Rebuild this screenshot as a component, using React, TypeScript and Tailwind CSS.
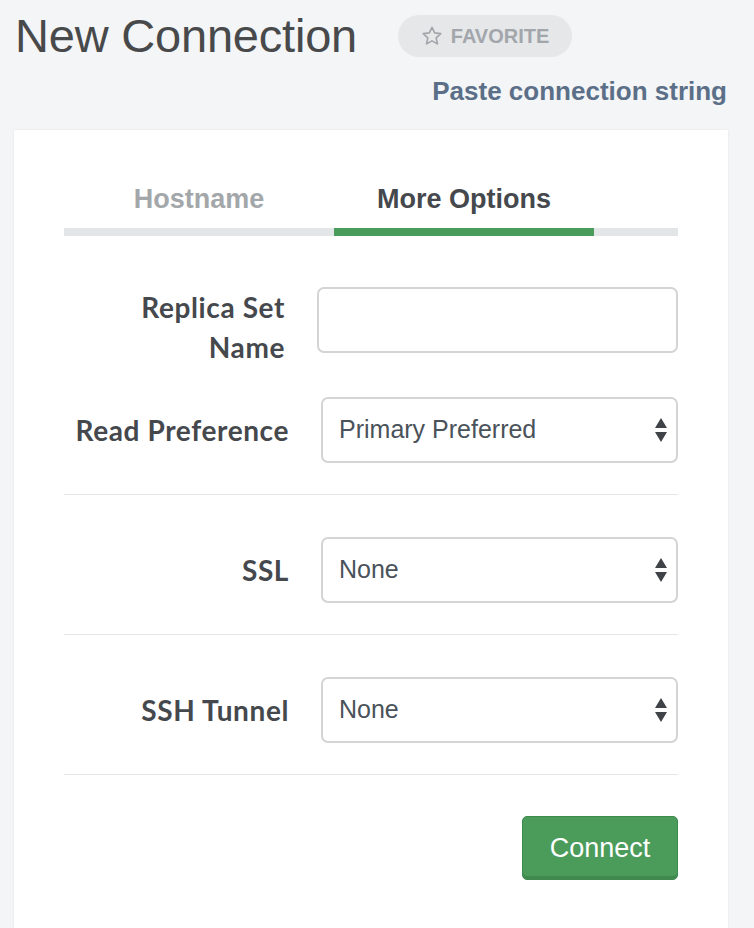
import React from "react";

function Arrows() {
  return (
    <svg width="14" height="26" viewBox="0 0 14 26" className="shrink-0">
      <path d="M7 1 L13 11 L1 11 Z" fill="#3f4347" />
      <path d="M7 25 L13 15 L1 15 Z" fill="#3f4347" />
    </svg>
  );
}

function Select({ value }: { value: string }) {
  return (
    <div className="ml-[32px] flex h-[66px] w-[357px] items-center justify-between rounded-[7px] border-2 border-[#d4d4d4] bg-white pl-[16px] pr-[8px]">
      <span className="text-[25px] text-[#4a525a]" style={{ fontFamily: '"Liberation Sans", Arial, sans-serif' }}>{value}</span>
      <Arrows />
    </div>
  );
}

const labelCls = "w-[225px] text-right text-[28px] font-bold text-[#45484c] leading-[40px] tracking-[0.6px]";
const labelFont = { fontFamily: '"Lato", "Liberation Sans", sans-serif' };

export default function App() {
  return (
    <div className="min-h-[928px] bg-[#f4f5f6] overflow-hidden" style={{ fontFamily: '"Liberation Sans", Arial, sans-serif' }}>
      <div className="h-[130px] relative">
        <div className="flex items-center pl-[15px] pt-[12px]">
          <h1 className="text-[47px] leading-[48px] text-[#48494b] font-normal tracking-[-0.2px]">New Connection</h1>
          <div className="ml-[41px] flex h-[42px] w-[174px] items-center justify-center gap-[8px] rounded-full bg-[#e5e7e9] text-[20px] font-bold text-[#a2a6ab]">
            <svg width="22" height="22" viewBox="0 0 24 24" fill="none" stroke="#a2a6ab" strokeWidth="1.8" strokeLinejoin="round">
              <path d="M12 2.5l2.9 6.1 6.6.8-4.9 4.6 1.3 6.6L12 17.3l-5.9 3.3 1.3-6.6-4.9-4.6 6.6-.8z" />
            </svg>
            <span>FAVORITE</span>
          </div>
        </div>
        <div className="flex justify-end pr-[27px] mt-[12px]">
          <span className="text-[26px] font-bold text-[#5b6f88]">Paste connection string</span>
        </div>
      </div>

      <div className="ml-[14px] w-[714px] min-h-[798px] bg-white px-[50px] pt-[53px] shadow-[0_0_2px_rgba(0,0,0,0.08)]">
        <div className="flex">
          <div className="w-[270px]">
            <div className="text-center text-[27px] font-bold text-[#a3a7aa] leading-[32px]">Hostname</div>
            <div className="mt-[13px] h-[8px] bg-[#e3e6e6]" />
          </div>
          <div className="w-[260px]">
            <div className="text-center text-[27px] font-bold text-[#45484c] leading-[32px]">More Options</div>
            <div className="mt-[13px] h-[8px] bg-[#4a9c5a]" />
          </div>
          <div className="flex-1">
            <div className="h-[32px]" />
            <div className="mt-[13px] h-[8px] bg-[#e3e6e6]" />
          </div>
        </div>

        <div className="pt-[51px] pb-[31px] border-b border-[#e6e6e6]">
          <div className="flex items-start">
            <div className={labelCls + " pr-[4px]"} style={labelFont}>
              Replica Set
              <br />
              Name
            </div>
            <div className="ml-[28px] h-[66px] w-[361px] rounded-[7px] border-2 border-[#d4d4d4] bg-white" />
          </div>
          <div className="mt-[30px] flex items-center">
            <div className={labelCls} style={labelFont}>Read Preference</div>
            <Select value="Primary Preferred" />
          </div>
        </div>

        <div className="pt-[42px] pb-[31px] border-b border-[#e6e6e6]">
          <div className="flex items-center">
            <div className={labelCls} style={labelFont}>SSL</div>
            <Select value="None" />
          </div>
        </div>

        <div className="pt-[42px] pb-[31px] border-b border-[#e6e6e6]">
          <div className="flex items-center">
            <div className={labelCls} style={labelFont}>SSH Tunnel</div>
            <Select value="None" />
          </div>
        </div>

        <div className="flex justify-end pt-[41px]">
          <button className="flex h-[64px] w-[156px] items-center justify-center rounded-[5px] border border-[#3f8a4e] bg-[#4b9b5b] text-[27px] text-white shadow-[inset_0_-3px_0_rgba(0,0,0,0.12)]">
            Connect
          </button>
        </div>
      </div>
    </div>
  );
}
